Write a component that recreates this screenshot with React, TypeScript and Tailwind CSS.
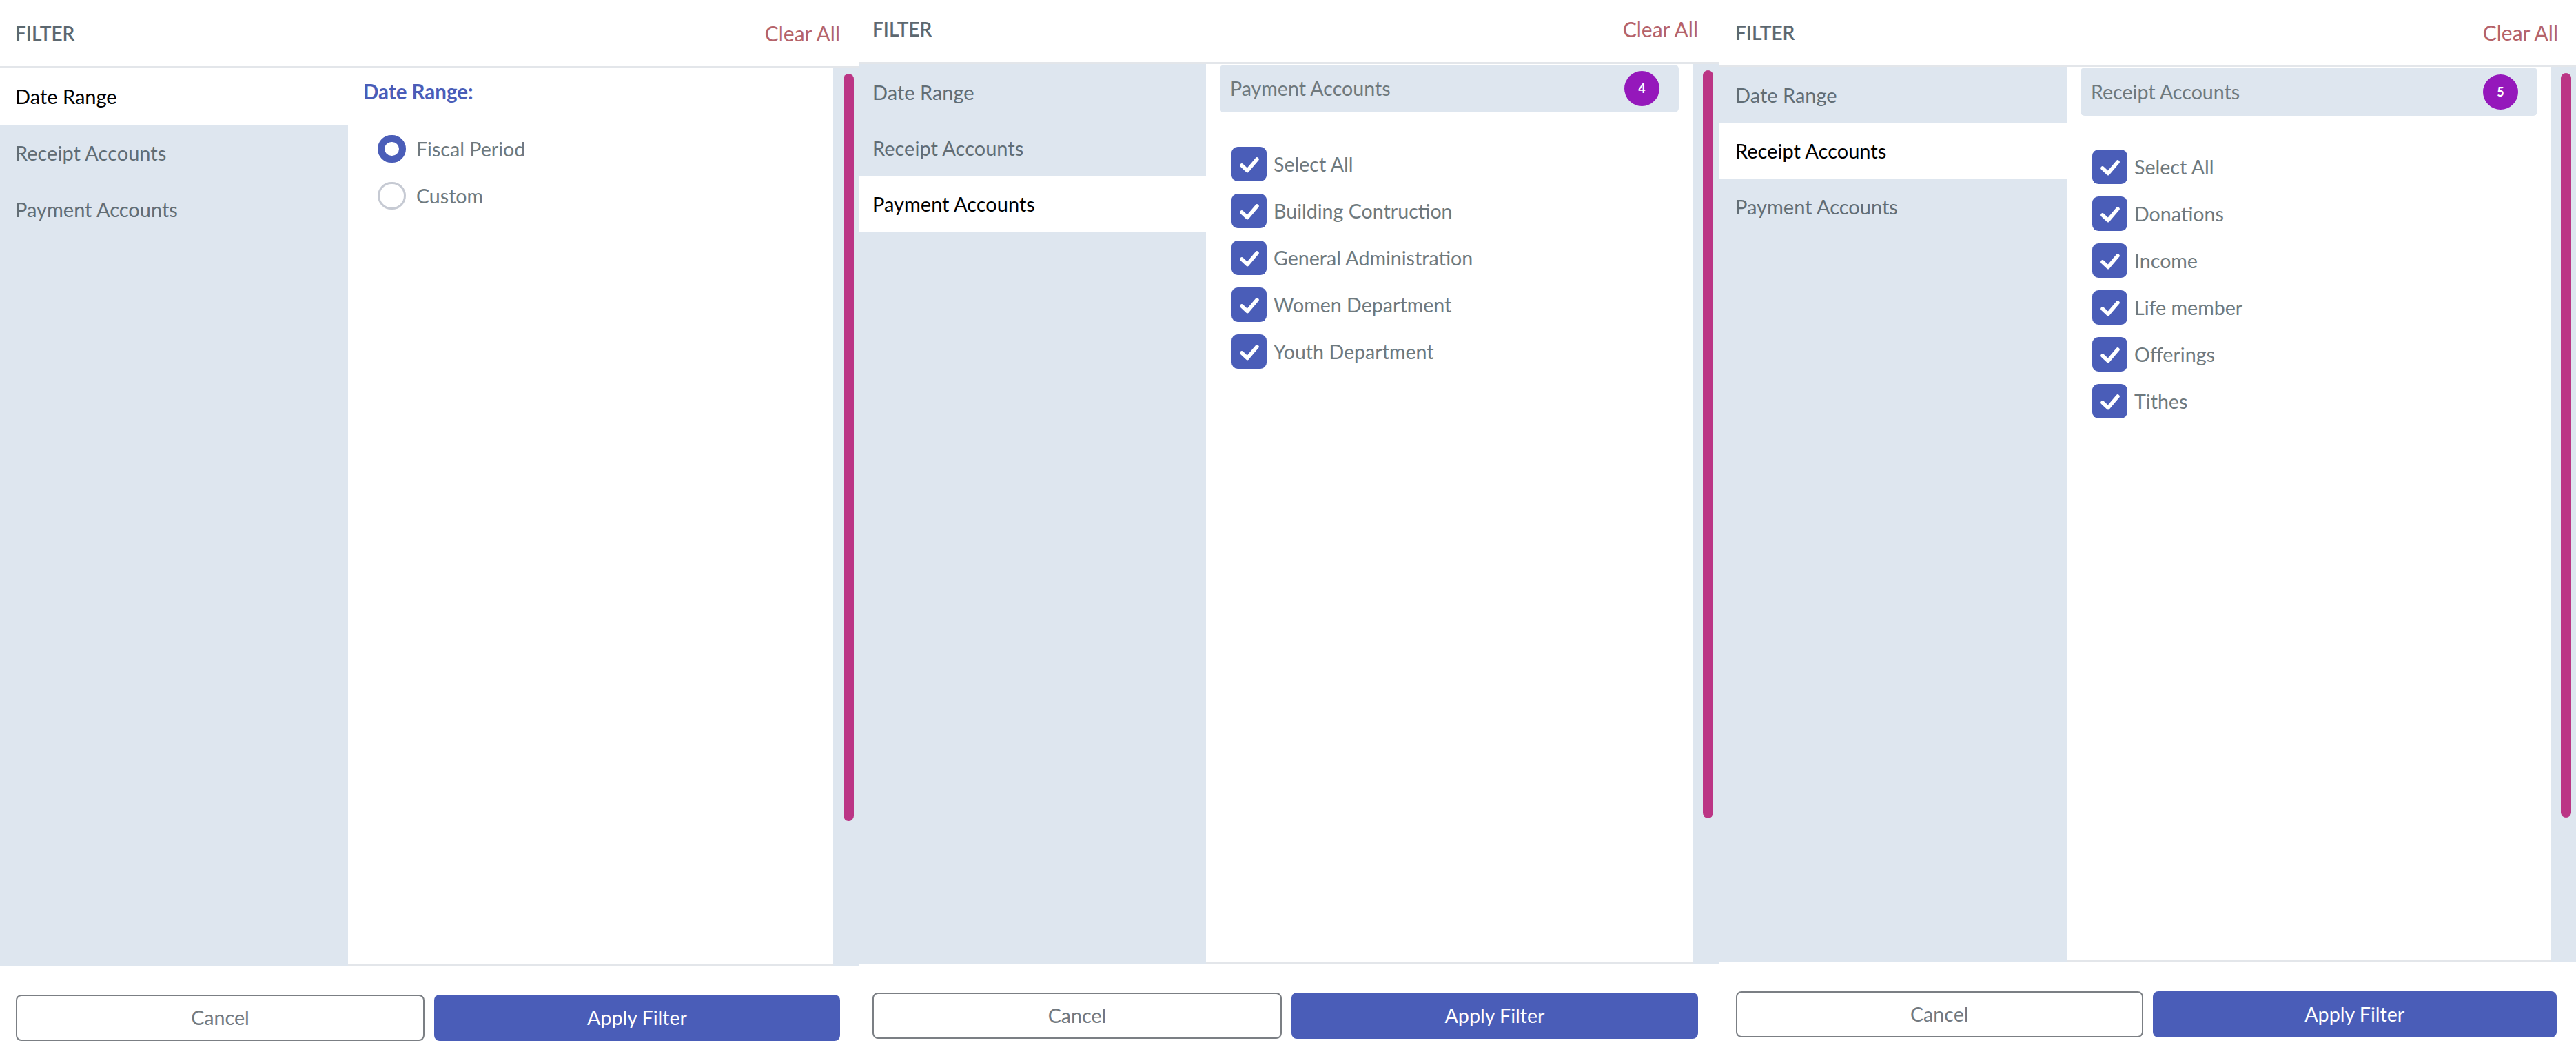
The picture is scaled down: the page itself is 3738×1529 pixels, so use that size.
const tabs = ["Date Range", "Receipt Accounts", "Payment Accounts"];

const CheckBox = ({ label }: { label: string }) => (
  <div className="flex items-center gap-[10px] h-[50px]">
    <div className="w-[51px] h-[50px] rounded-[9px] bg-[#4a5db8] flex items-center justify-center">
      <svg width="51" height="50" viewBox="0 0 51 50">
        <path d="M15 27l8 7.5L37 18" fill="none" stroke="#fff" strokeWidth="5.5" strokeLinecap="round" strokeLinejoin="round" />
      </svg>
    </div>
    <span>{label}</span>
  </div>
);

const Radio = ({ label, checked }: { label: string; checked?: boolean }) => (
  <div className="flex items-center gap-[15px] h-[40px]">
    {checked ? (
      <div className="w-[41px] h-[40px] rounded-full border-[10px] border-[#4a5db8] bg-white" />
    ) : (
      <div className="w-[41px] h-[40px] rounded-full border-[3px] border-[#c6cad3] bg-white" />
    )}
    <span>{label}</span>
  </div>
);

const AccountList = ({ title, count, items, barClass, listClass }: { title: string; count: number; items: string[]; barClass: string; listClass: string }) => (
  <div className="h-full">
    <div className={barClass}>
      <span>{title}</span>
      <span className="w-[51px] h-[51px] rounded-full bg-[#9518bb] text-white text-[18px] font-bold flex items-center justify-center">
        {count}
      </span>
    </div>
    <div className={listClass}>
      {items.map((item) => (
        <CheckBox key={item} label={item} />
      ))}
    </div>
  </div>
);

type PanelProps = {
  active: number;
  panelClass: string;
  headerClass: string;
  sidebarClass: string;
  rowClass: string;
  trackClass: string;
  thumbClass: string;
  footerClass: string;
  children: React.ReactNode;
};

const Panel = ({ active, panelClass, headerClass, sidebarClass, rowClass, trackClass, thumbClass, footerClass, children }: PanelProps) => (
  <div className={panelClass}>
    {/* Header */}
    <div className={headerClass}>
      <span className="font-semibold text-[#5c6870] text-[28px]">FILTER</span>
      <span className="text-[#b5636a] text-[30px]">Clear All</span>
    </div>

    {/* Body */}
    <div className="flex-1 min-h-0 flex border-t-[3px] border-[#e3e6ea]">
      <div className={sidebarClass}>
        {tabs.map((tab, i) => (
          <div
            key={tab}
            className={`${rowClass} ${i === active ? "bg-white text-black" : "text-[#616d75]"}`}
          >
            {tab}
          </div>
        ))}
      </div>
      <div className="flex-1 border-b-[3px] border-[#e3e6ea]">{children}</div>
      <div className={trackClass}>
        <div className={thumbClass} />
      </div>
    </div>

    {/* Footer */}
    <div className={footerClass}>
      <button className="flex-1 h-[67px] rounded-[8px] border-[2px] border-[#7b7f84] text-[#72797f]">Cancel</button>
      <button className="flex-1 h-[67px] rounded-[8px] bg-[#4a5db8] text-white">Apply Filter</button>
    </div>
  </div>
);

export default function App() {
  return (
    <div className="flex h-[1529px] w-[3738px] overflow-hidden bg-white text-[28.6px] text-[#6e797e] font-['Lato','Noto_Sans',sans-serif]">
      <Panel
        active={0}
        panelClass="w-[1246px] h-full flex flex-col"
        headerClass="h-[96px] flex items-center justify-between pl-[22px] pr-[27px]"
        sidebarClass="w-[505px] bg-[#dee6ef]"
        rowClass="h-[82px] pl-[22px] text-[29px] flex items-center"
        trackClass="w-[37px] bg-[#dee6ef] pt-[8px]"
        thumbClass="ml-[15px] w-[15px] h-[1084px] rounded-full bg-[#bb3585]"
        footerClass="h-[127px] flex gap-[14px] pt-[41px] pl-[23px] pr-[27px]"
      >
        <div className="pl-[22px] pt-[14px]">
          <div className="font-bold text-[#4a5db8] text-[29.5px] h-[40px] leading-[40px]">Date Range:</div>
          <div className="flex flex-col gap-[28px] pt-[43px] pl-[21px]">
            <Radio label="Fiscal Period" checked />
            <Radio label="Custom" />
          </div>
        </div>
      </Panel>

      <Panel
        active={2}
        panelClass="w-[1248px] h-full flex flex-col"
        headerClass="h-[90px] flex items-center justify-between pl-[20px] pb-[6px] pr-[30px]"
        sidebarClass="w-[504px] bg-[#dee6ef]"
        rowClass="h-[81px] pl-[20px] text-[29px] flex items-center"
        trackClass="w-[38px] bg-[#dee6ef] pt-[9px]"
        thumbClass="ml-[15px] w-[15px] h-[1085px] rounded-full bg-[#bb3585]"
        footerClass="h-[131px] flex gap-[14px] pt-[42px] pl-[20px] pr-[30px]"
      >
        <AccountList
          title="Payment Accounts"
          count={4}
          barClass="mt-[1px] mx-[20px] h-[69px] rounded-[6px] bg-[#dee6ef] flex items-center justify-between pl-[15px] pr-[28px]"
          listClass="flex flex-col gap-[18px] pt-[50px] pl-[37px]"
          items={["Select All", "Building Contruction", "General Administration", "Women Department", "Youth Department"]}
        />
      </Panel>

      <Panel
        active={1}
        panelClass="w-[1244px] h-full flex flex-col"
        headerClass="h-[94px] flex items-center justify-between pl-[24px] pr-[26px]"
        sidebarClass="w-[505px] bg-[#dee6ef]"
        rowClass="h-[81px] pl-[24px] text-[29px] flex items-center"
        trackClass="w-[36px] bg-[#dee6ef] pt-[9px]"
        thumbClass="ml-[14px] w-[15px] h-[1080px] rounded-full bg-[#bb3585]"
        footerClass="h-[133px] flex gap-[14px] pt-[42px] pl-[25px] pr-[28px]"
      >
        <AccountList
          title="Receipt Accounts"
          count={5}
          barClass="mt-[1px] mx-[20px] h-[70px] rounded-[6px] bg-[#dee6ef] flex items-center justify-between pl-[15px] pr-[28px]"
          listClass="flex flex-col gap-[18px] pt-[49px] pl-[37px]"
          items={["Select All", "Donations", "Income", "Life member", "Offerings", "Tithes"]}
        />
      </Panel>
    </div>
  );
}
